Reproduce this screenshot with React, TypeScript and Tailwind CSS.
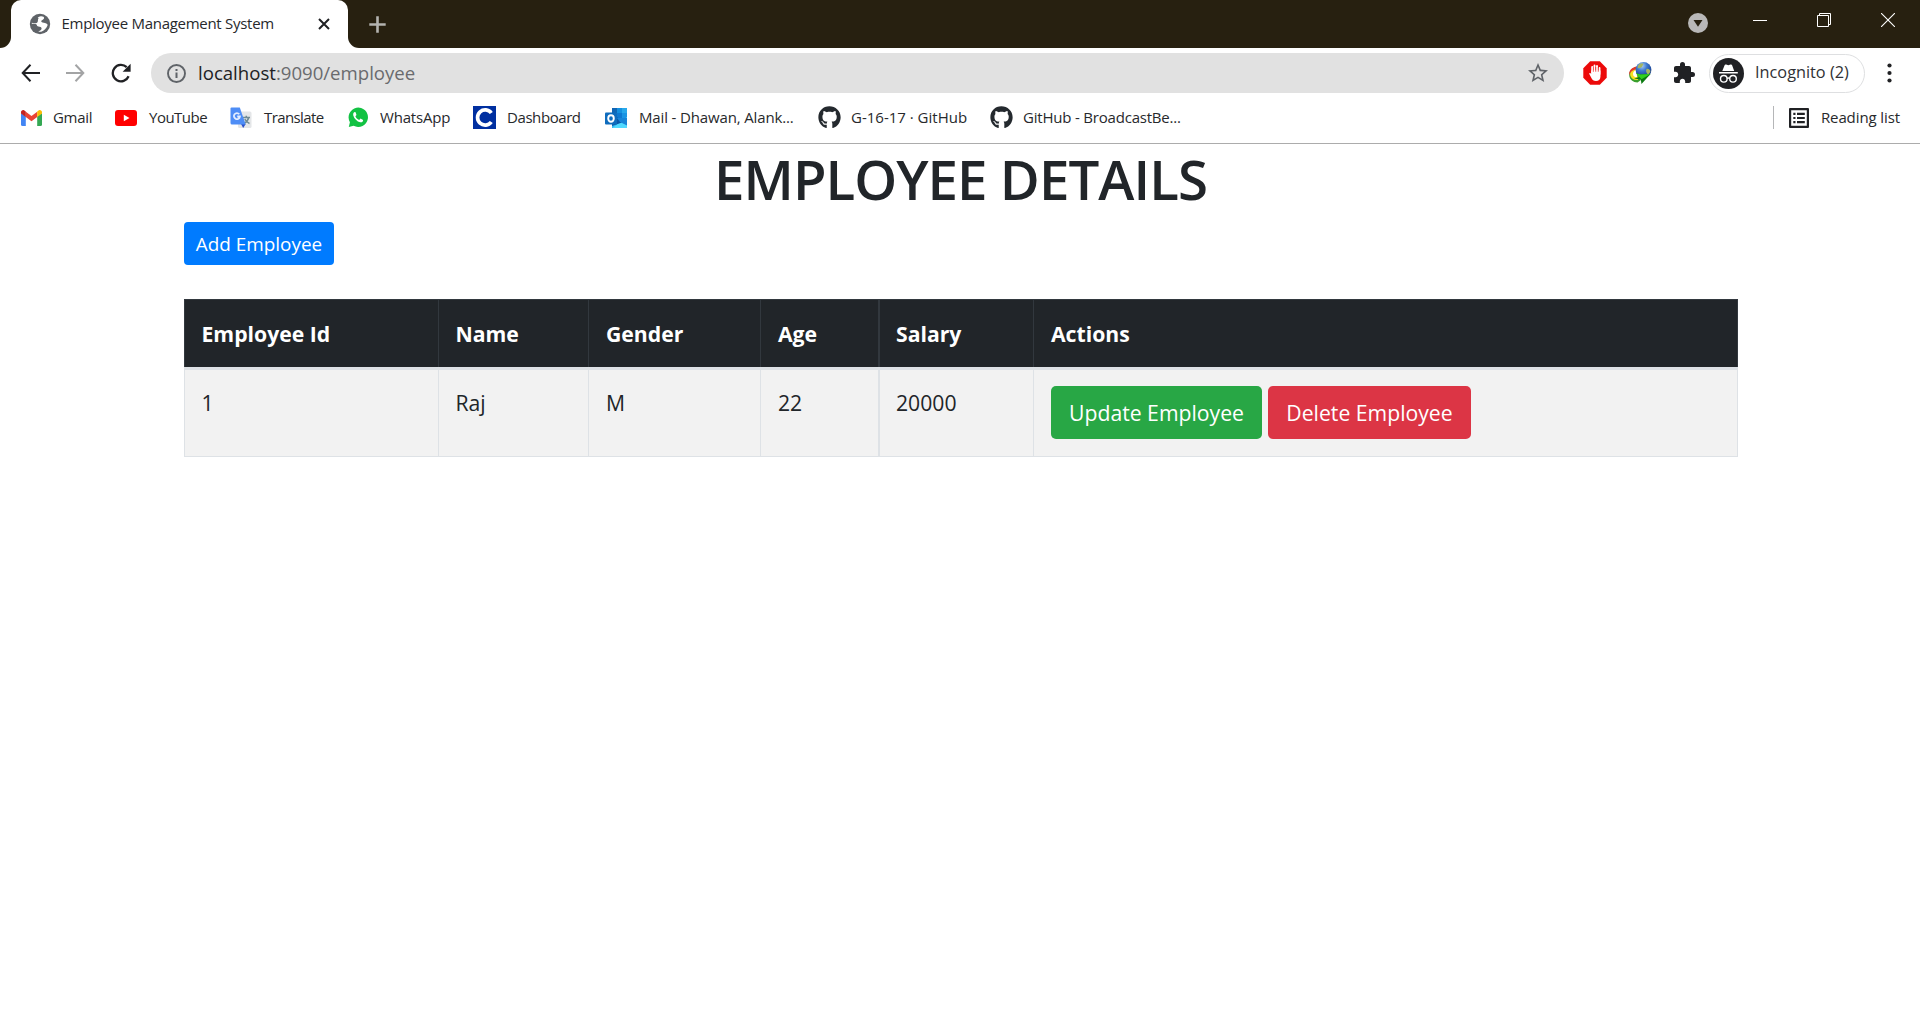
import type { ReactNode } from 'react';
import { FaGithub } from 'react-icons/fa';
import { MdExtension, MdStarBorder } from 'react-icons/md';

function GlobeIcon() {
  return (
    <svg width="22" height="22" viewBox="0 0 22 22">
      <circle cx="11" cy="11" r="10.2" fill="#5f6368" />
      <path
        d="M11.800 3.300 C14 3.200 15.500 4 15 5.500 C14.500 7 12.300 6.800 12.200 8.300 C12.200 9.600 14.500 9.600 16 9.900 C17.800 10.200 19 11.400 18.500 12.600 C17.500 15.500 15 17.900 12.200 18.800 L9.300 18.800 C10.500 17.800 12.300 17.500 12.600 15.800 C12.900 14 10.800 13.800 9.400 13.600 C7.300 13.300 8.600 11.500 6.600 11.100 L2.700 10.800 L3.100 9 C5 9.300 7.300 9.900 8 8.500 C8.600 7.100 7.600 5.800 8.800 4.700 C9.500 4 10.400 3.500 11.800 3.300 Z"
        fill="#fff"
      />
      <path d="M3 9.700 C5.300 10.600 8 10.600 8.700 8.800 C9.200 7.400 8.500 6.200 9.700 5.200 L6.800 4 L3 8 Z" fill="#5f6368" />
    </svg>
  );
}

function GmailIcon() {
  return (
    <svg width="21" height="16" viewBox="0 0 21 16">
      <path d="M0 3 L4.800 6.500 V16 H1.500 Q0 16 0 14.500 Z" fill="#4285f4" />
      <path d="M21 3 L16.200 6.500 V16 H19.500 Q21 16 21 14.500 Z" fill="#34a853" />
      <path d="M4.800 1.700 L10.500 6 L16.200 1.700 V7 L10.500 11.300 L4.800 7 Z" fill="#ea4335" />
      <path d="M0 2.400 C0 .3 2.400 -.7 4 .9 L4.800 1.600 V7 L0 3.500 Z" fill="#c5221f" />
      <path d="M21 2.400 C21 .3 18.600 -.7 17 .9 L16.200 1.600 V7 L21 3.500 Z" fill="#fbbc04" />
    </svg>
  );
}

function YouTubeIcon() {
  return (
    <svg width="22" height="16" viewBox="0 0 22 16">
      <rect width="22" height="16" rx="3" fill="#f00" />
      <path d="M8.800 4.800 L14.500 8 L8.800 11.200 Z" fill="#fff" />
    </svg>
  );
}

function TranslateIcon() {
  return (
    <svg width="22" height="22" viewBox="0 0 22 22">
      <rect x="8" y="4.500" width="13.500" height="16.500" rx="1.500" fill="#e4e6e8" />
      <path
        d="M13 10.500 H20 M16.300 8.800 V10.500 M18.700 10.500 C18 13.500 16 15.500 14 16.500 M14.800 12 C16 14.500 17.500 15.800 19.500 16.500"
        stroke="#6f8b94"
        strokeWidth="1.500"
        fill="none"
      />
      <path d="M11 17 H15.700 L13.200 21 Z" fill="#2b50c8" />
      <path d="M1.500 .5 H9.800 L15.700 17.500 H2 Q.5 17.500 .5 16 V1.500 Q.5 .5 1.500 .5 Z" fill="#4e8df6" />
      <path d="M9.300 7.200 A3 3 0 1 0 9.900 9.500 H7.200" stroke="#e3edff" strokeWidth="1.800" fill="none" />
    </svg>
  );
}

function WhatsAppIcon() {
  return (
    <svg width="20" height="21" viewBox="0 0 20 21">
      <path d="M.8 20 L1.900 15.200 A9.700 9.700 0 1 1 5.600 18.800 Z" fill="#12c243" />
      <path
        d="M6.700 5 C5.400 5.500 4.900 6.900 5.300 8.500 C6.300 11.900 9 14.500 12.200 15.300 C14 15.600 15.100 14.600 15.100 12.900 L12.500 11.500 L11.200 12.900 C9.300 12.200 8.100 10.900 7.400 9.300 L8.500 7.900 L7.600 5.300 Q7.200 4.900 6.700 5 Z"
        fill="#fff"
      />
    </svg>
  );
}

function DashboardIcon() {
  return (
    <svg width="23" height="23" viewBox="0 0 23 23">
      <rect width="23" height="23" fill="#002fa0" />
      <path d="M18.300 7 A7.600 7.600 0 1 0 18.300 16" stroke="#fff" strokeWidth="3.700" fill="none" />
    </svg>
  );
}

function OutlookIcon() {
  return (
    <svg width="22" height="22" viewBox="0 0 22 22">
      <rect x="7" y="1" width="15" height="14" fill="#28a8ea" />
      <rect x="7" y="1" width="5" height="5" fill="#1066b5" />
      <rect x="12" y="1" width="5" height="5" fill="#1490df" />
      <rect x="12" y="6" width="5" height="5" fill="#0f78d0" />
      <rect x="17" y="6" width="5" height="5" fill="#1a94e3" />
      <path d="M7 21 V12 L22 21 Z" fill="#35b8f1" />
      <path d="M22 10 V21 H7.500 Z" fill="#50d9ff" />
      <path d="M7 10 H12 L17 15.500 L7 19 Z" fill="#0a57a8" />
      <path d="M12 11 H22 V18.500 L15 15 Z" fill="#1784d8" />
      <rect x="0" y="5.500" width="12" height="12" rx="1" fill="#0f6cbd" />
      <ellipse cx="6" cy="11.500" rx="2.800" ry="3.200" stroke="#fff" strokeWidth="1.900" fill="none" />
    </svg>
  );
}

function ReadingListIcon() {
  return (
    <svg width="20" height="20" viewBox="0 0 20 20" fill="#202124">
      <path fillRule="evenodd" d="M1 0 H19 Q20 0 20 1 V19 Q20 20 19 20 H1 Q0 20 0 19 V1 Q0 0 1 0 Z M2.200 2.200 V17.800 H17.800 V2.200 Z" />
      <path d="M4.300 4.800 H6.500 V7 H4.300 Z M8 4.800 H15.800 V7 H8 Z M4.300 8.900 H6.500 V11.100 H4.300 Z M8 8.900 H15.800 V11.100 H8 Z M4.300 13 H6.500 V15.200 H4.300 Z M8 13 H15.800 V15.200 H8 Z" />
    </svg>
  );
}

function StopHandIcon() {
  return (
    <svg width="24" height="24" viewBox="0 0 24 24">
      <path d="M7.200 .3 H16.800 L23.700 7.200 V16.800 L16.800 23.700 H7.200 L.3 16.800 V7.200 Z" fill="#ec0a0a" />
      <path d="M9.200 12 V6 M11.500 11 V4.500 M14 11 V5 M16.500 13 V7" stroke="#fff" strokeWidth="1.900" strokeLinecap="round" />
      <path
        d="M8.250 9.500 L17.450 9.500 V15.500 C17.450 18.500 15.500 20 13 20 C10.500 20 9.300 19 8.400 17 L6.300 13 C6 12 7.300 11.400 8.250 12.900 Z"
        fill="#fff"
      />
      <path d="M10.350 6 V11 M12.750 6 V11 M15.250 6 V11" stroke="#ec0a0a" strokeWidth=".5" />
    </svg>
  );
}

function DownloadManagerIcon() {
  return (
    <svg width="24" height="24" viewBox="0 0 24 24">
      <defs>
        <radialGradient id="globe" cx=".4" cy=".25" r=".8">
          <stop offset="0" stopColor="#a9cdf5" />
          <stop offset=".4" stopColor="#3b78cf" />
          <stop offset="1" stopColor="#12307c" />
        </radialGradient>
      </defs>
      <path d="M9 6 C3 7 .8 11 1.300 15 C1.800 18.500 5 21.500 9.500 21.500 L13 19 L9 12 Z" fill="#3aa02c" />
      <path d="M9 6.500 C3.500 7.500 1.800 11 2.300 14.500 C3 17.500 6 19.500 10 19 L9 12 Z" fill="#f7e021" />
      <path d="M9 5.500 C4 6 .7 9.500 1 14.500 C2 11 5 8.500 8.500 8.500 Z" fill="#e0392b" />
      <path d="M8.500 9 C5.500 9.800 4.600 12 5.200 14 C5.600 15.600 7 16.200 9 16 Z" fill="#fff" />
      <circle cx="15.500" cy="8.800" r="7.900" fill="url(#globe)" />
      <path
        d="M10.500 4 C12 2.500 14 2.200 15.500 2.800 C14.500 4.500 14.500 6 13 6.500 C12 7.500 11 6.500 9.800 7.500 C9.500 6 9.900 4.800 10.500 4 Z M18.500 8 C20 7.500 21.500 8.500 22.500 10 C22 12 21 13 19.800 13.500 C18.500 12 17.500 10 18.500 8 Z"
        fill="#a4b562"
      />
      <path d="M8 12.200 L12.500 13.500 L22.500 13 L13.500 23 L12.800 18.500 L6 17.500 L11.500 16 Z" fill="#0b7a10" />
      <path d="M8 12.200 L12.500 13.500 L22.500 13 L13.500 18.300 Z" fill="#2fd11f" />
    </svg>
  );
}

function IncognitoIcon() {
  return (
    <svg width="31" height="31" viewBox="0 0 31 31">
      <circle cx="15.500" cy="15.500" r="15.500" fill="#202124" />
      <path d="M9.300 13 L11.600 7.300 Q12 6.200 13.200 6.600 L15.300 7.300 L17.500 6.600 Q18.700 6.200 19.100 7.300 L21.200 13 Z" fill="#fff" />
      <rect x="6" y="14" width="18.800" height="1.500" fill="#fff" />
      <g fill="none" stroke="#fff" strokeWidth="1.400">
        <circle cx="10.800" cy="20.800" r="3.300" />
        <circle cx="20" cy="20.800" r="3.300" />
        <path d="M14 20.400 Q15.400 19.500 16.800 20.400" />
      </g>
    </svg>
  );
}

type Bookmark = { label: string; icon: ReactNode; item: string; slot: string; tracking: string };

const bookmarks: Bookmark[] = [
  { label: 'Gmail', icon: <GmailIcon />, item: 'w-[94px]', slot: 'w-[32px]', tracking: 'tracking-[-0.3px]' },
  { label: 'YouTube', icon: <YouTubeIcon />, item: 'w-[115px]', slot: 'w-[34px]', tracking: 'tracking-[-0.5px]' },
  { label: 'Translate', icon: <TranslateIcon />, item: 'w-[118px]', slot: 'w-[34px]', tracking: 'tracking-[-0.6px]' },
  { label: 'WhatsApp', icon: <WhatsAppIcon />, item: 'w-[125px]', slot: 'w-[32px]', tracking: 'tracking-[-0.2px]' },
  { label: 'Dashboard', icon: <DashboardIcon />, item: 'w-[132px]', slot: 'w-[34px]', tracking: 'tracking-[-0.42px]' },
  { label: 'Mail - Dhawan, Alank...', icon: <OutlookIcon />, item: 'w-[213px]', slot: 'w-[34px]', tracking: 'tracking-[-0.14px]' },
  { label: 'G-16-17 · GitHub', icon: <FaGithub size={23} color="#24292e" />, item: 'w-[172px]', slot: 'w-[33px]', tracking: 'tracking-normal' },
  { label: 'GitHub - BroadcastBe...', icon: <FaGithub size={23} color="#24292e" />, item: 'w-[200px]', slot: 'w-[33px]', tracking: 'tracking-[-0.2px]' },
];

function TabStrip() {
  return (
    <div className="flex h-12 bg-[#272010]">
      <div className="h-12 w-[11px] bg-white">
        <div className="h-full w-full rounded-br-[11px] bg-[#272010]" />
      </div>
      <div className="flex h-12 w-[337px] items-center rounded-t-[10px] bg-white pl-[17.500px]">
        <GlobeIcon />
        <span className="mb-0.5 ml-[11px] w-[246px] text-[15px] leading-none tracking-[-0.28px] whitespace-nowrap text-[#27292c]">
          Employee Management System
        </span>
        <svg width="12" height="12" viewBox="0 0 12 12" className="ml-[10.500px]">
          <path d="M1 1 L11 11 M11 1 L1 11" stroke="#202124" strokeWidth="2" />
        </svg>
      </div>
      <div className="h-12 w-[11px] bg-white">
        <div className="h-full w-full rounded-bl-[11px] bg-[#272010]" />
      </div>
      <svg width="17" height="17" viewBox="0 0 17 17" className="mt-[15.500px] ml-[10px]">
        <path d="M8.500 .3 V16.700 M.3 8.500 H16.700" stroke="#b4b3b0" strokeWidth="2.600" />
      </svg>
      <div className="ml-auto flex pr-[25px]">
        <svg width="20" height="20" viewBox="0 0 20 20" className="mt-[13px] mr-[45px]">
          <circle cx="10" cy="10" r="10" fill="#b9b8b8" />
          <path d="M5.500 7 H14.500 L10 13.800 Z" fill="#272010" />
        </svg>
        <svg width="14" height="14" viewBox="0 0 14 14" className="mt-[13px] mr-[50px]">
          <path d="M0 7.500 H14" stroke="#fff" />
        </svg>
        <svg width="14" height="14" viewBox="0 0 14 14" className="mt-[13px] mr-[50px]">
          <path d="M.5 2.500 H11.500 V13.500 H.5 Z M2.500 2.500 V.5 H13.500 V11.500 H11.500" stroke="#fff" fill="none" />
        </svg>
        <svg width="14" height="14" viewBox="0 0 14 14" className="mt-[13px]">
          <path d="M0 0 L14 14 M14 0 L0 14" stroke="#fff" strokeWidth="1.100" />
        </svg>
      </div>
    </div>
  );
}

function Toolbar() {
  return (
    <div className="flex h-[50px] items-center pl-[21px]">
      <svg width="19" height="18" viewBox="0 0 19 18" fill="none" stroke="#202124" strokeWidth="2">
        <path d="M9.500 .8 L1.700 9 L9.500 17.200 M1.700 9 H19" />
      </svg>
      <svg width="19" height="18" viewBox="0 0 19 18" fill="none" stroke="#a3a4a5" strokeWidth="2" className="ml-[26px]">
        <path d="M9.500 .8 L17.300 9 L9.500 17.200 M17.300 9 H0" />
      </svg>
      <svg width="20" height="20" viewBox="0 0 20 20" className="ml-[26px]">
        <path d="M17.600 13.200 A8.200 8.200 0 1 1 15.700 4.200" fill="none" stroke="#202124" strokeWidth="2.300" />
        <path d="M19.600 .8 V8.800 H11.600 Z" fill="#202124" />
      </svg>
      <div className="ml-5 flex h-10 w-[1413px] items-center rounded-full bg-[#e1e1e1] pl-4">
        <svg width="19" height="19" viewBox="0 0 19 19">
          <circle cx="9.500" cy="9.500" r="8.500" fill="none" stroke="#5f6368" strokeWidth="1.900" />
          <path d="M9.500 8.500 V14 M9.500 5 V7" stroke="#5f6368" strokeWidth="2" />
        </svg>
        <span className="ml-[12px] text-[18.600px] leading-none whitespace-nowrap text-[#6a6b6e]">
          <span className="text-[#202124]">localhost</span>:9090/employee
        </span>
        <MdStarBorder size={24} color="#5f6368" className="mr-[14px] ml-auto" />
      </div>
      <div className="ml-[19px]">
        <StopHandIcon />
      </div>
      <div className="ml-[21px]">
        <DownloadManagerIcon />
      </div>
      <MdExtension size={24} color="#202124" className="ml-[20px]" />
      <div className="ml-[13px] flex h-[39px] w-[156px] items-center rounded-full border border-[#dedfe1] pl-[3px]">
        <IncognitoIcon />
        <span className="mb-0.5 ml-[11px] text-[16.300px] leading-none whitespace-nowrap text-[#303134]">
          Incognito (2)
        </span>
      </div>
      <svg width="5" height="20" viewBox="0 0 5 20" className="ml-[22px]" fill="#202124">
        <circle cx="2.500" cy="2.500" r="2.100" />
        <circle cx="2.500" cy="10" r="2.100" />
        <circle cx="2.500" cy="17.500" r="2.100" />
      </svg>
    </div>
  );
}

function BookmarkBar() {
  return (
    <div className="flex h-[46px] items-center border-b border-[#acacac] pb-[6px] pl-[21px] text-[15px] text-[#27292c]">
      {bookmarks.map((b) => (
        <div key={b.label} className={`flex h-6 shrink-0 items-center ${b.item}`}>
          <div className={`flex shrink-0 ${b.slot}`}>{b.icon}</div>
          <span className={`leading-none whitespace-nowrap ${b.tracking}`}>{b.label}</span>
        </div>
      ))}
      <div className="ml-auto flex items-center pr-5">
        <div className="h-[23px] w-px bg-[#b5b6b8]" />
        <div className="ml-[15px]">
          <ReadingListIcon />
        </div>
        <span className="ml-[12px] leading-none tracking-[-0.1px] whitespace-nowrap">Reading list</span>
      </div>
    </div>
  );
}

const columns = [
  { title: 'Employee Id', value: '1', cell: 'border-l pl-[16.500px]' },
  { title: 'Name', value: 'Raj', cell: 'border-l pl-[16.500px]' },
  { title: 'Gender', value: 'M', cell: 'border-l pl-[17px]' },
  { title: 'Age', value: '22', cell: 'border-l pl-[17px]' },
  { title: 'Salary', value: '20000', cell: 'border-l-2 pl-[16px]' },
];

function EmployeeTable() {
  return (
    <div className="mt-[34px] w-[1554px] text-[21.200px] leading-[33px]">
      <div className="grid h-[68px] grid-cols-[254px_150px_172px_118px_155px_705px] bg-[#212529] font-bold text-white">
        {columns.map((c) => (
          <div key={c.title} className={`border-t border-[#32383e] pt-[17px] ${c.cell}`}>
            {c.title}
          </div>
        ))}
        <div className="border-x border-t border-[#32383e] pt-[17px] pl-[17px]">Actions</div>
      </div>
      <div className="h-[3px] bg-[#dee2e6]" />
      <div className="grid h-[87px] grid-cols-[254px_150px_172px_118px_155px_705px] bg-[#f2f2f2] text-[#212529]">
        {columns.map((c) => (
          <div key={c.title} className={`border-b border-[#dee2e6] pt-[16px] ${c.cell}`}>
            {c.value}
          </div>
        ))}
        <div className="flex gap-1.5 border-x border-b border-[#dee2e6] pt-4 pl-[17px] text-white">
          <button className="h-[53px] w-[211px] rounded-[5px] bg-[#28a745] whitespace-nowrap">Update Employee</button>
          <button className="h-[53px] w-[203px] rounded-[5px] bg-[#dc3545] whitespace-nowrap">Delete Employee</button>
        </div>
      </div>
    </div>
  );
}

export default function App() {
  return (
    <div className="h-[1014px] w-[1920px] overflow-hidden bg-white font-['Open_Sans',sans-serif]">
      <TabStrip />
      <Toolbar />
      <BookmarkBar />
      <main className="pl-[184px]">
        <h1 className="h-[78px] w-[1553px] pt-[2px] text-center text-[54.600px] leading-[66px] font-semibold tracking-[-0.95px] text-[#212529]">
          EMPLOYEE DETAILS
        </h1>
        <button className="block h-[43px] w-[150px] rounded-[4px] bg-[#007bff] pt-px text-[18.900px] whitespace-nowrap text-white">
          Add Employee
        </button>
        <EmployeeTable />
      </main>
    </div>
  );
}
